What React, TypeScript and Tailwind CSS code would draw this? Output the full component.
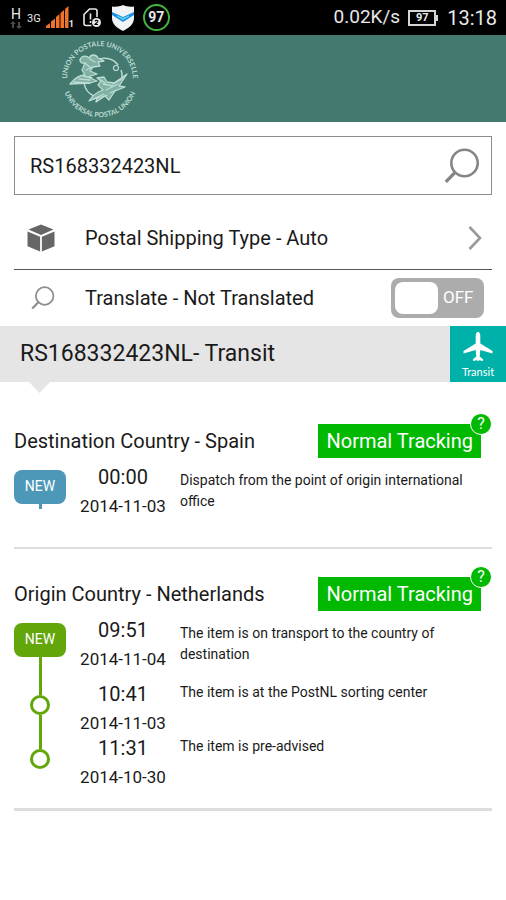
import { useState } from "react";

interface TrackEvent {
    time: string;
    date: string;
    text: string;
}

interface Leg {
    id: string;
    title: string;
    tone: "blue" | "green";
    events: TrackEvent[];
}

const legs: Leg[] = [
    {
        id: "destination",
        title: "Destination Country - Spain",
        tone: "blue",
        events: [
            { time: "00:00", date: "2014-11-03", text: "Dispatch from the point of origin international office" },
        ],
    },
    {
        id: "origin",
        title: "Origin Country - Netherlands",
        tone: "green",
        events: [
            { time: "09:51", date: "2014-11-04", text: "The item is on transport to the country of destination" },
            { time: "10:41", date: "2014-11-03", text: "The item is at the PostNL sorting center" },
            { time: "11:31", date: "2014-10-30", text: "The item is pre-advised" },
        ],
    },
];

const tones = {
    blue: { fill: "bg-[#4d98b9]", ring: "border-[#4d98b9]" },
    green: { fill: "bg-[#62a60a]", ring: "border-[#62a60a]" },
};

function SearchIcon({ className }: { className: string }) {
    return (
        <svg className={className} viewBox="0 0 36 36" fill="none" stroke="currentColor" aria-hidden="true">
            <circle cx="20.5" cy="15" r="13.2" strokeWidth="2.6" />
            <path d="M11 24.5 1.8 33.8" strokeWidth="3.2" />
        </svg>
    );
}

function StatusBar() {
    return (
        <div className="flex h-[35px] items-center justify-between bg-black pr-[9px] pl-2 text-[#e8e8e8]">
            <div className="flex items-center">
                <div className="flex w-4 flex-col items-center">
                    <span className="text-[14px] leading-[14px]">H</span>
                    <svg className="h-2 w-3" viewBox="0 0 12 8" fill="#4a4a4a" aria-hidden="true">
                        <path d="M3 0 6 3H4v4H2V3H0zM9 8 6 5h2V1h2v4h2z" />
                    </svg>
                </div>
                <span className="mt-1 ml-[3px] text-[11px]">3G</span>
                <svg className="ml-[5px] h-[23px] w-[23px]" viewBox="0 0 23 23" fill="#f0712c" aria-hidden="true">
                    <path d="M0 20 4 17v5H0zM5 15.500 9 12.500V22H5zM10 11l3.500-3v14H10zM14.500 7 18 4v18h-3.500zM19 3l3.500-3v22H19z" />
                </svg>
                <span className="mt-3 text-[9px] leading-3 font-bold">1</span>
                <svg className="ml-[9px] h-5 w-[19px]" viewBox="0 0 19 20" fill="none" stroke="#e8e8e8" strokeWidth="1.600" aria-hidden="true">
                    <path d="M8.500 17.500H3a2 2 0 0 1-2-2V6.500L6.500 1H12a2 2 0 0 1 2 2v6" />
                    <path d="M7.500 5.500v6M7.500 13v2" />
                    <circle cx="13.500" cy="14.500" r="4.500" fill="#e8e8e8" stroke="none" />
                    <path d="M12 13.200c.5-1.300 3-1.100 2.800.3-.2 1.100-1.800 1.600-2.800 3h3" stroke="#000" strokeWidth="1.100" />
                </svg>
                <svg className="ml-[10px] h-[26px] w-[22px]" viewBox="0 0 22 26" aria-hidden="true">
                    <path d="M11 0c3 1.500 7 2 11 1.500V13c0 6-5 10-11 13C5 23 0 19 0 13V1.500C4 2 8 1.500 11 0z" fill="#f1f4f6" />
                    <path d="M0 7l11 5 11-5v3l-11 7L0 10z" fill="#1b8fe0" />
                    <path d="M5 11 11 14.500l6-3.500-6 2.500z" fill="#5ed4fb" stroke="#5ed4fb" />
                </svg>
                <div className="ml-[9px] flex size-[27px] items-center justify-center rounded-full border-2 border-[#43b53c] text-[14px] font-bold">97</div>
            </div>
            <div className="flex items-center">
                <span className="text-[19px]">0.02K/s</span>
                <div className="ml-2 flex h-4 w-7 items-center justify-center border-2 border-[#d5d5d5] text-[11px] leading-none font-bold">97</div>
                <div className="h-[6px] w-[2px] bg-[#d5d5d5]" />
                <span className="ml-[9px] text-[20px]">13:18</span>
            </div>
        </div>
    );
}

function UpuLogo() {
    return (
        <svg className="h-20 w-20" viewBox="0 0 80 80" fill="none" stroke="#bcdcd3" role="img" aria-label="Universal Postal Union">
            <defs>
                <path id="arc-top" d="M11.400 56.500A33 33 0 1 1 68.600 56.500" />
                <path id="arc-bottom" d="M2.500 34A38 38 0 1 0 77.500 34" />
            </defs>
            <g fill="#bcdcd3" stroke="none" fontFamily="Lato, sans-serif" fontSize="7" fontWeight="700">
                <text textAnchor="middle"><textPath href="#arc-top" startOffset="50%">UNION POSTALE UNIVERSELLE</textPath></text>
                <text textAnchor="middle"><textPath href="#arc-bottom" startOffset="50%">UNIVERSAL POSTAL UNION</textPath></text>
            </g>
            {/* Globe */}
            <path d="M35 22c8-5 18-3 23 4M61 31c2 5 1 10-1 14M24 44c1 6 5 11 10 13M27 33c-1 2-3 5-3 7" strokeWidth="1.500" />
            <circle cx="56" cy="29" r="2.500" strokeWidth="1.200" />
            {/* Messengers */}
            <g strokeWidth="1.300" strokeLinecap="round" strokeLinejoin="round">
                <path d="M10 45c5-6 9-9 15-9l-3-5 3-7c-5 1-6-3-4-5 2-3 6-2 8 0 2-4 7-4 9 0l6 3-6 1 2 4-7 1-3 4 7 3-9 3 9 4-7 2z" fill="#7fb0a3" />
                <path d="M14 43l16 1M19 40l11 1M23 37l9 2M25 24l6 5M30 20l5 3M26 31l6-3" />
                <path d="M29 62c4-6 8-9 14-11l-5-5 3-4-4-3 7-1 3 5 7 1 13-9-8 12 6 1-10 4-6 9-4-4-9 6 1-4z" fill="#7fb0a3" />
                <path d="M33 60l11-5M38 59l9-3M43 45l10 2M46 51l12-6M53 45l11-6M50 54l7-3M41 41l4 3" />
            </g>
        </svg>
    );
}

function LegSection({ leg, last: lastLeg }: { leg: Leg; last: boolean }) {
    const tone = tones[leg.tone];
    return (
        <section className={`mx-[14px] border-[#dddddd] pt-7 pb-[18px] ${lastLeg ? "border-b-3" : "border-b-2"}`}>
            <div className="flex h-[34px] items-center justify-between pr-[11px]">
                <h2 className="text-[20px]">{leg.title}</h2>
                <div className="relative bg-[#00b900] px-2 text-[20px] leading-[34px] text-white">
                    Normal Tracking
                    <button
                        type="button"
                        aria-label="About normal tracking"
                        className="absolute -top-[11px] -right-[11px] flex size-[22px] items-center justify-center rounded-full border border-white bg-[#00b900] text-[16px] leading-none"
                    >
                        ?
                    </button>
                </div>
            </div>

            <ol className="mt-[7px]">
                {leg.events.map((event, index) => {
                    const first = index === 0;
                    const last = index === leg.events.length - 1;
                    return (
                        <li key={event.date + event.time} className={first ? "flex min-h-16" : "flex min-h-[54px]"}>
                            {/* Timeline rail */}
                            <div className="flex w-[52px] shrink-0 flex-col items-center">
                                {first ? (
                                    <span className={`mt-[5px] h-[34px] w-full rounded-lg text-center text-[14px] leading-8 text-white ${tone.fill}`}>NEW</span>
                                ) : (
                                    <>
                                        <span className={`h-[13px] w-[3px] ${tone.fill}`} />
                                        <span className={`size-5 rounded-full border-3 ${tone.ring}`} />
                                    </>
                                )}
                                {!last && <span className={`w-[3px] flex-1 ${tone.fill}`} />}
                                {first && last && <span className={`h-[5px] w-[3px] ${tone.fill}`} />}
                            </div>
                            <div className="flex w-[114px] shrink-0 flex-col gap-[5px] text-center">
                                <span className="text-[20px] leading-6">{event.time}</span>
                                <span className="text-[17px] leading-6">{event.date}</span>
                            </div>
                            <p className={`flex-1 text-[14px] leading-[21px] ${first ? "pt-[5px]" : ""}`}>{event.text}</p>
                        </li>
                    );
                })}
            </ol>
        </section>
    );
}

export default function App() {
    const [code, setCode] = useState("RS168332423NL");
    const [translate, setTranslate] = useState(false);

    return (
        <div className="min-h-screen bg-white font-['Roboto',sans-serif] text-[#1a1a1a]">
            <StatusBar />
            <header className="flex h-[87px] items-center bg-[#43796f] pl-[60px]">
                <UpuLogo />
            </header>

            <main>
                <form className="mx-[14px] mt-[14px] flex h-[59px] items-center border border-[#8c8c8c] pr-[11px] pl-[15px]" onSubmit={(e) => e.preventDefault()}>
                    <input
                        aria-label="Tracking number"
                        className="min-w-0 flex-1 text-[20px] outline-none"
                        value={code}
                        onChange={(e) => setCode(e.target.value)}
                    />
                    <button type="submit" aria-label="Search" className="text-[#858585]">
                        <SearchIcon className="size-9" />
                    </button>
                </form>

                <button type="button" className="mx-[14px] flex h-[75px] w-[calc(100%-28px)] items-center border-b border-[#555555] pt-3 pr-[10px] pl-[13px] text-left text-[20px]">
                    <svg className="size-7" viewBox="0 0 28 28" fill="#666666" aria-hidden="true">
                        <path d="M14 .5 26.500 5.500 14 11 1.500 5.500zM.5 7.500l12.600 5.300V27.500L.5 22.300zM27.500 7.500V22.300L14.900 27.500V12.800z" />
                    </svg>
                    <span className="flex-1 pl-[30px]">Postal Shipping Type - Auto</span>
                    <svg className="h-6 w-[14px] text-[#999999]" viewBox="0 0 14 24" fill="none" stroke="currentColor" strokeWidth="2.600" aria-hidden="true">
                        <path d="M1.500 1 12 12 1.500 23" />
                    </svg>
                </button>

                <div className="mx-[14px] flex h-14 items-center pr-2 pl-[17px]">
                    <SearchIcon className="size-6 text-[#8c8c8c]" />
                    <label htmlFor="translate" className="flex-1 pl-[30px] text-[20px]">Translate - Not Translated</label>
                    <div className="relative">
                        <input
                            id="translate"
                            type="checkbox"
                            role="switch"
                            checked={translate}
                            onChange={(e) => setTranslate(e.target.checked)}
                            className="peer block h-10 w-[93px] appearance-none rounded-lg bg-[#acacac] checked:bg-[#62a60a]"
                        />
                        <span className="pointer-events-none absolute inset-0 flex items-center gap-[5px] p-1 text-[17px] text-white peer-checked:flex-row-reverse">
                            <span className="h-8 w-[43px] rounded-lg bg-white" />
                            {translate ? "ON" : "OFF"}
                        </span>
                    </div>
                </div>

                <div className="relative flex h-14 items-center bg-[#e5e5e5] pl-5">
                    <h1 className="flex-1 text-[23px]">RS168332423NL- Transit</h1>
                    <div className="flex h-full w-14 flex-col items-center bg-[#00b1a9] pt-[6px] text-white">
                        <svg className="h-[30px] w-[30px]" viewBox="0 0 30 30" fill="currentColor" aria-hidden="true">
                            <path d="M15 0c1.600 0 2.300 2 2.300 4v7.500L29.500 19v2.500L17.300 18l-.6 6.500 3.300 2.700v1.800l-4-.8-1 1-1-1-4 .8v-1.800l3.300-2.700-.6-6.500L.5 21.500V19l12.200-7.500V4c0-2 .7-4 2.300-4z" />
                        </svg>
                        <span className="font-['Lato',sans-serif] text-[11px] leading-5">Transit</span>
                    </div>
                    {/* Notch under the bar */}
                    <svg className="absolute top-full left-[29px] h-[11px] w-[21px]" viewBox="0 0 21 11" fill="#e5e5e5" aria-hidden="true">
                        <path d="M0 0h21L10.500 11z" />
                    </svg>
                </div>

                <div className="pt-[14px]">
                    {legs.map((leg, index) => (
                        <LegSection key={leg.id} leg={leg} last={index === legs.length - 1} />
                    ))}
                </div>
            </main>
        </div>
    );
}
